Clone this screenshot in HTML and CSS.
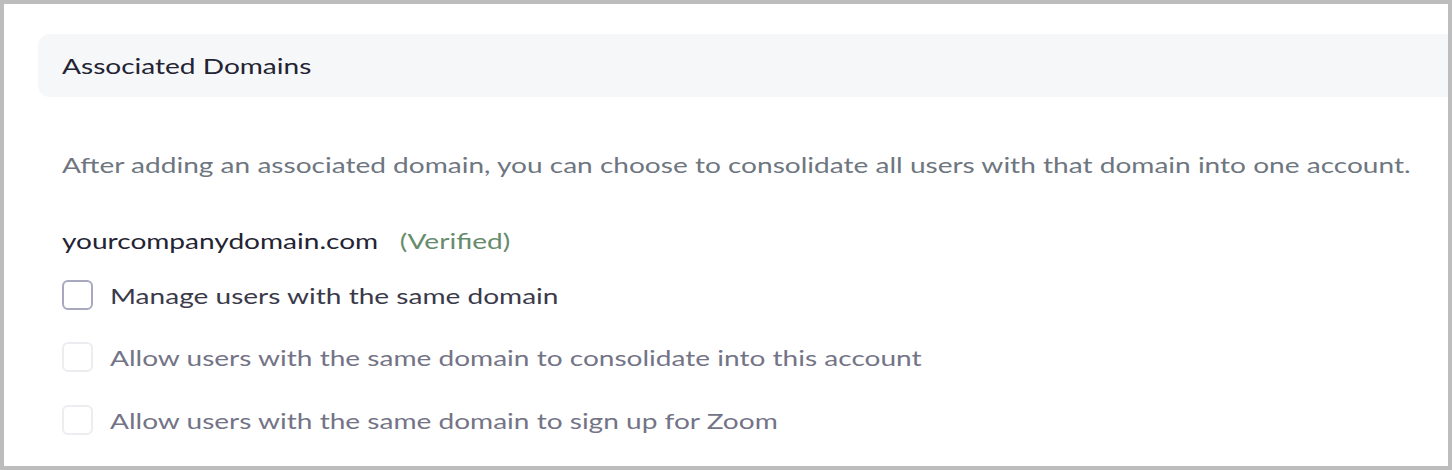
FILE: index.html
```html
<!DOCTYPE html>
<html>
<head>
<meta charset="utf-8">
<link rel="stylesheet" href="styles.css">
</head>
<body>
<div class="frame">
  <div class="section-head"><span class="t">Associated Domains</span></div>
  <div class="content">
    <p class="desc"><span class="t">After adding an associated domain, you can choose to consolidate all users with that domain into one account.</span></p>
    <div class="domain"><span class="t"><span class="name">yourcompanydomain.com</span><span class="verified">(Verified)</span></span></div>
    <label class="opt"><span class="box"></span><span class="t lbl">Manage users with the same domain</span></label>
    <label class="opt disabled"><span class="box"></span><span class="t lbl">Allow users with the same domain to consolidate into this account</span></label>
    <label class="opt disabled last"><span class="box"></span><span class="t lbl">Allow users with the same domain to sign up for Zoom</span></label>
  </div>
</div>
</body>
</html>
```
FILE: styles.css
```css
html, body {
  margin: 0;
  padding: 0;
  background: #bdbdbd;
}
body {
  width: 1452px;
  height: 470px;
  overflow: hidden;
  font-family: Lato, "Open Sans", sans-serif;
}
.frame {
  box-sizing: border-box;
  margin: 4px 4px 4px 4px;
  height: 462px;
  background: #fff;
  padding-top: 30px;
  padding-left: 34px;
}
.t {
  display: inline-block;
  white-space: nowrap;
  transform: scaleX(1.275);
  transform-origin: left center;
}
.section-head {
  height: 63px;
  background: #f6f7f9;
  border-radius: 12px 0 0 12px;
  display: flex;
  align-items: center;
  padding-left: 24px;
  font-size: 22px;
  color: #232333;
}
.content {
  padding-left: 24px;
}
.desc {
  margin: 0;
  padding-top: 53px;
  font-size: 22px;
  line-height: 30px;
  color: #6e7680;
}
.domain {
  margin-top: 46px;
  font-size: 22px;
  line-height: 30px;
  color: #232333;
}
.verified {
  margin-left: 17px;
  color: #668c6c;
}
.opt {
  display: flex;
  align-items: center;
  height: 32px;
  margin-top: 23px;
  font-size: 22px;
  color: #3a3a4a;
}
.opt + .opt {
  margin-top: 30px;
}
.opt + .opt.last {
  margin-top: 31px;
}
.box {
  box-sizing: border-box;
  width: 31px;
  height: 30px;
  border: 2px solid #a8a8bf;
  border-radius: 6px;
  margin-right: 17px;
  flex: none;
}
.opt.disabled {
  color: #747487;
}
.opt.disabled .box {
  border-color: #ededf1;
}
```
